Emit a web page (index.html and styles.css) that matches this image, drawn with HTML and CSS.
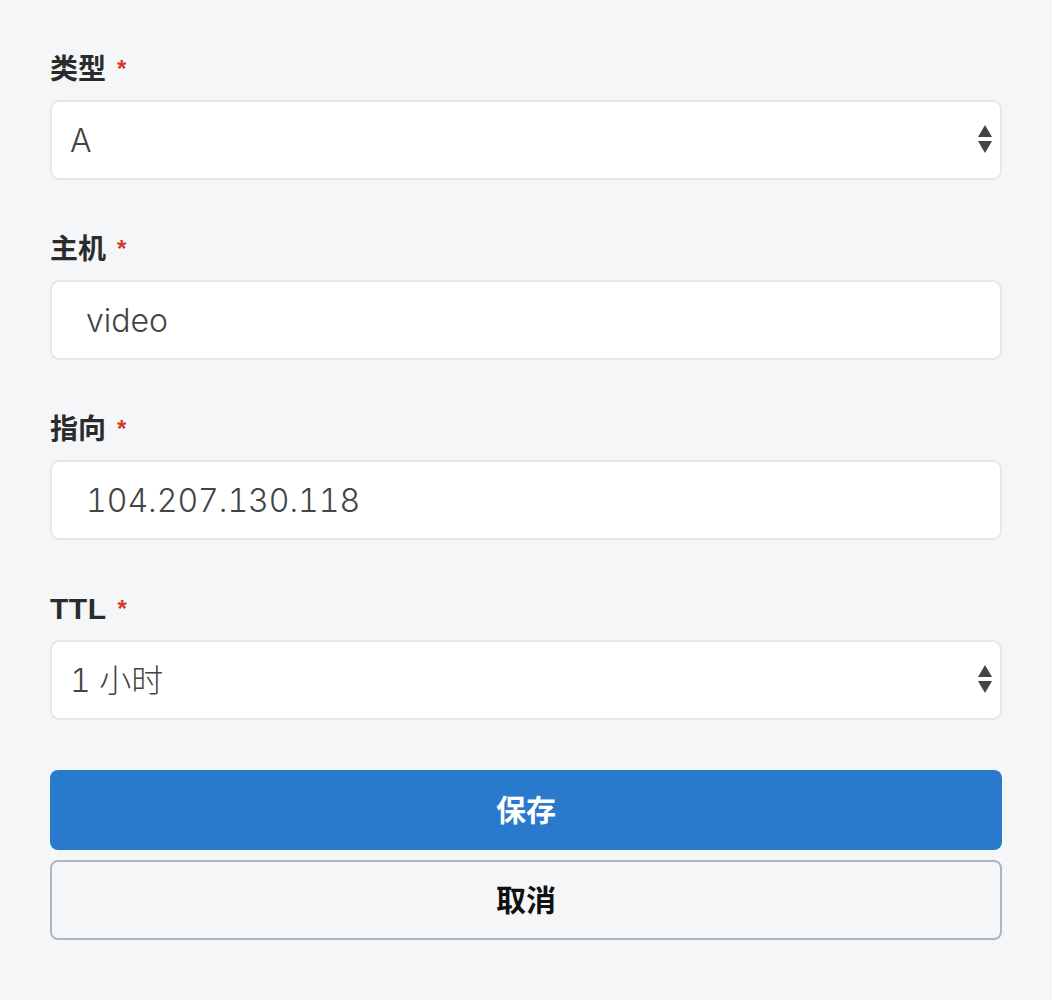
FILE: index.html
```html
<!DOCTYPE html>
<html lang="zh">
<head>
<meta charset="utf-8">
<link rel="stylesheet" href="styles.css">
</head>
<body>
<form class="form">
  <div class="field">
    <label class="label">类型<span class="req">*</span></label>
    <div class="select-wrap">
      <select class="control select"><option>A</option></select>
      <svg class="arrows" width="16" height="30" viewBox="0 0 16 30"><path d="M8 0 L15 12 L1 12 Z" fill="#444"/><path d="M1 16 L15 16 L8 28 Z" fill="#444"/></svg>
    </div>
  </div>
  <div class="field">
    <label class="label">主机<span class="req">*</span></label>
    <input class="control input" type="text" value="video">
  </div>
  <div class="field">
    <label class="label">指向<span class="req">*</span></label>
    <input class="control input" type="text" value="104.207.130.118">
  </div>
  <div class="field">
    <label class="label label-latin">TTL<span class="req">*</span></label>
    <div class="select-wrap">
      <select class="control select"><option>1 小时</option></select>
      <svg class="arrows" width="16" height="30" viewBox="0 0 16 30"><path d="M8 0 L15 12 L1 12 Z" fill="#444"/><path d="M1 16 L15 16 L8 28 Z" fill="#444"/></svg>
    </div>
  </div>
  <div class="actions">
    <button type="button" class="btn btn-primary">保存</button>
    <button type="button" class="btn btn-secondary">取消</button>
  </div>
</form>
</body>
</html>
```
FILE: styles.css
```css
html, body {
  margin: 0;
  padding: 0;
  background: #f5f6f8;
}
body {
  font-family: "Liberation Sans", "Noto Sans CJK SC", sans-serif;
  color: #2b2b2b;
}
.form {
  padding: 0 50px;
  display: flex;
  flex-direction: column;
}
.field {
  display: flex;
  flex-direction: column;
}
.label {
  display: block;
  padding-top: 50px;
  height: 38px;
  line-height: 38px;
  margin-bottom: 12px;
  font-size: 28px;
  font-weight: 700;
  color: #2b2b2b;
}
.label-latin {
  font-size: 30px;
  letter-spacing: 0.5px;
}
.req {
  color: #d3391f;
  font-size: 24px;
  margin-left: 11px;
  letter-spacing: 0;
  vertical-align: 2px;
}
.control {
  box-sizing: border-box;
  width: 100%;
  height: 80px;
  margin: 0;
  border: 2px solid #e6e7e9;
  border-radius: 9px;
  background: #fff;
  font-family: "Inter", "Noto Sans CJK SC", sans-serif;
  font-weight: 300;
  font-size: 32px;
  font-variant-numeric: tabular-nums;
  color: #444;
  outline: none;
}
.input {
  padding: 0 34px;
}
.select-wrap {
  position: relative;
}
.select {
  appearance: none;
  -webkit-appearance: none;
  padding: 0 18px;
  display: block;
}
.arrows {
  position: absolute;
  right: 9px;
  top: 25px;
}
.actions {
  display: flex;
  flex-direction: column;
  gap: 10px;
  margin-top: 50px;
}
.btn {
  box-sizing: border-box;
  width: 100%;
  height: 80px;
  padding: 0 0 5px;
  border-radius: 8px;
  font-family: "Liberation Sans", "Noto Sans CJK SC", sans-serif;
  font-size: 30px;
  font-weight: 700;
  cursor: pointer;
}
.btn-primary {
  background: #2979cc;
  border: none;
  color: #fff;
}
.btn-secondary {
  background: #f5f6f8;
  border: 2px solid #acb6c0;
  color: #111;
}
```
